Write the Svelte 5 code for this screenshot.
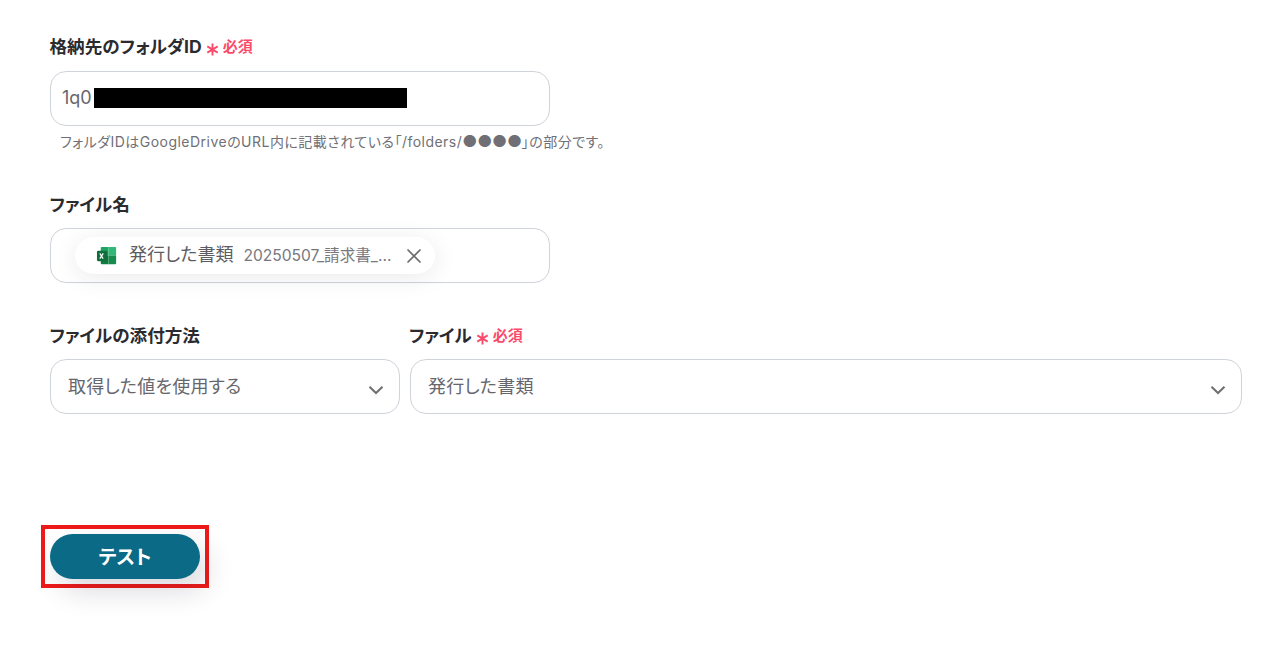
<script>
  const open = "\u300C/folders/";
  const dots = "\u25CF\u25CF\u25CF\u25CF";
  const tail = "\u300D\u306E\u90E8\u5206\u3067\u3059\u3002";
</script>

{#snippet star()}
  <svg class="star" viewBox="0 0 12 12" width="13" height="13" aria-hidden="true">
    <path d="M6 .5v11M1.2 3.2l9.6 5.6M10.8 3.2L1.2 8.8" stroke="#fb4b6b" stroke-width="1.8" fill="none"/>
  </svg>
{/snippet}

<main class="page">
  <section class="field first">
    <div class="label">格納先のフォルダID{@render star()}<span class="req">必須</span></div>
    <div class="box text-box">
      <span class="value">1q0</span><span class="mask"></span>
    </div>
    <p class="hint">フォルダIDはGoogleDriveのURL内に記載されている{open}<span class="dots">{dots}</span>{tail}</p>
  </section>

  <section class="field second">
    <div class="label">ファイル名</div>
    <div class="box chip-box">
      <div class="chip">
        <svg class="xl" viewBox="0 0 24 24" width="23" height="23" aria-hidden="true">
          <path fill="#21a366" d="M6 3h7v9H5V4a1 1 0 0 1 1-1z"/>
          <path fill="#2fb877" d="M13 3h7a1 1 0 0 1 1 1v8h-8z"/>
          <path fill="#107c41" d="M5 12h8v9H6a1 1 0 0 1-1-1z"/>
          <path fill="#178a4e" d="M13 12h8v8a1 1 0 0 1-1 1h-7z"/>
          <rect x="1" y="7" width="11" height="11" rx="1.2" fill="#0f6f3b"/>
          <path d="M4 9.8l3.4 5.4M7.6 9.8l-3.6 5.4" stroke="#fff" stroke-width="1.3" fill="none"/>
        </svg>
        <span class="chip-name">発行した書類</span>
        <span class="chip-sub">20250507_請求書_...</span>
        <svg class="close" viewBox="0 0 16 16" width="16" height="16" aria-hidden="true">
          <path d="M1.5 1.5l13 13M14.5 1.5l-13 13" stroke="#6b6b6b" stroke-width="1.7" fill="none"/>
        </svg>
      </div>
    </div>
  </section>

  <section class="row">
    <div class="col-a">
      <div class="label">ファイルの添付方法</div>
      <div class="box select">
        <span class="sel-text">取得した値を使用する</span>
        <svg class="chev" viewBox="0 0 16 10" width="16" height="10" aria-hidden="true">
          <path d="M1.5 1.8L8 8l6.5-6.2" stroke="#6f6f6f" stroke-width="2" fill="none"/>
        </svg>
      </div>
    </div>
    <div class="col-b">
      <div class="label">ファイル{@render star()}<span class="req">必須</span></div>
      <div class="box select">
        <span class="sel-text">発行した書類</span>
        <svg class="chev" viewBox="0 0 16 10" width="16" height="10" aria-hidden="true">
          <path d="M1.5 1.8L8 8l6.5-6.2" stroke="#6f6f6f" stroke-width="2" fill="none"/>
        </svg>
      </div>
    </div>
  </section>

  <div class="frame">
    <button class="test" type="button">テスト</button>
  </div>
</main>

<style>
  :global(body) {
    margin: 0;
    background: #fff;
    font-family: Inter, "Noto Sans CJK JP", sans-serif;
    font-feature-settings: "palt";
  }
  .page {
    box-sizing: border-box;
    width: 1287px;
    height: 646px;
    padding: 35px 45px 0 50px;
    overflow: hidden;
    color: #2f2f33;
  }
  .label {
    display: flex;
    align-items: center;
    height: 24px;
    margin: 0 0 12px -0.5px;
    font-size: 17.6px;
    font-weight: 700;
    line-height: 24px;
    color: #2b2b2f;
    white-space: nowrap;
  }
  .star {
    flex: none;
    margin-left: 4px;
    transform: translateY(2px);
  }
  .req {
    margin-left: 4px;
    font-size: 15px;
    font-weight: 700;
    color: #fb4b6b;
  }
  .box {
    box-sizing: border-box;
    height: 55px;
    border: 1px solid #cfd3da;
    border-radius: 16px;
    background: #fff;
    display: flex;
    align-items: center;
  }
  .field {
    width: 500px;
  }
  .text-box {
    padding-left: 11px;
    padding-bottom: 2px;
  }
  .value {
    font-size: 18px;
    line-height: 24px;
    color: #66666c;
  }
  .mask {
    display: block;
    width: 313px;
    height: 20px;
    margin-left: 2px;
    background: #000;
  }
  .hint {
    height: 18px;
    margin: 6px 0 0 10px;
    font-size: 14px;
    letter-spacing: 0.48px;
    line-height: 18px;
    color: #6f6f75;
    white-space: nowrap;
  }
  .dots {
    font-size: 16.5px;
    letter-spacing: -0.2px;
    line-height: 18px;
  }
  .second {
    margin-top: 43px;
  }
  .second .label {
    margin-bottom: 11px;
  }
  .chip-box {
    padding-left: 24px;
  }
  .chip {
    box-sizing: border-box;
    display: flex;
    align-items: center;
    width: 360px;
    height: 37px;
    padding-left: 21px;
    border-radius: 19px;
    background: #fff;
    box-shadow: 0 4px 24px rgba(30, 30, 50, 0.09);
  }
  .xl {
    flex: none;
  }
  .chip-name {
    margin-left: 10px;
    font-size: 18px;
    line-height: 24px;
    transform: translateY(-1px);
    color: #5c5c62;
  }
  .chip-sub {
    margin-left: 10px;
    font-size: 15.6px;
    line-height: 24px;
    color: #77777d;
    white-space: nowrap;
  }
  .close {
    margin-left: 15px;
    flex: none;
  }
  .row {
    display: flex;
    margin-top: 41px;
  }
  .row .label {
    margin-bottom: 11px;
  }
  .col-a {
    flex: none;
    width: 350px;
  }
  .col-b {
    flex: none;
    width: 832px;
    margin-left: 10px;
  }
  .col-b .label {
    margin-left: -1px;
  }
  .select {
    justify-content: space-between;
    padding: 0 15px 0 17px;
  }
  .sel-text {
    font-size: 18px;
    letter-spacing: 0.2px;
    line-height: 24px;
    color: #66666c;
  }
  .chev {
    margin-top: 6px;
    flex: none;
  }
  .frame {
    box-sizing: border-box;
    width: 168px;
    height: 63px;
    margin: 111px 0 0 -9px;
    padding: 5px;
    border: 4px solid #ee1a1a;
  }
  .test {
    display: block;
    width: 150px;
    height: 45px;
    padding: 1px 0 0;
    border: 0;
    border-radius: 23px;
    background: #0b6a86;
    color: #fff;
    font: 700 19.5px/24px Inter, "Noto Sans CJK JP", sans-serif;
    font-feature-settings: "palt";
    box-shadow: 8px 12px 28px rgba(30, 30, 60, 0.16);
  }
</style>
